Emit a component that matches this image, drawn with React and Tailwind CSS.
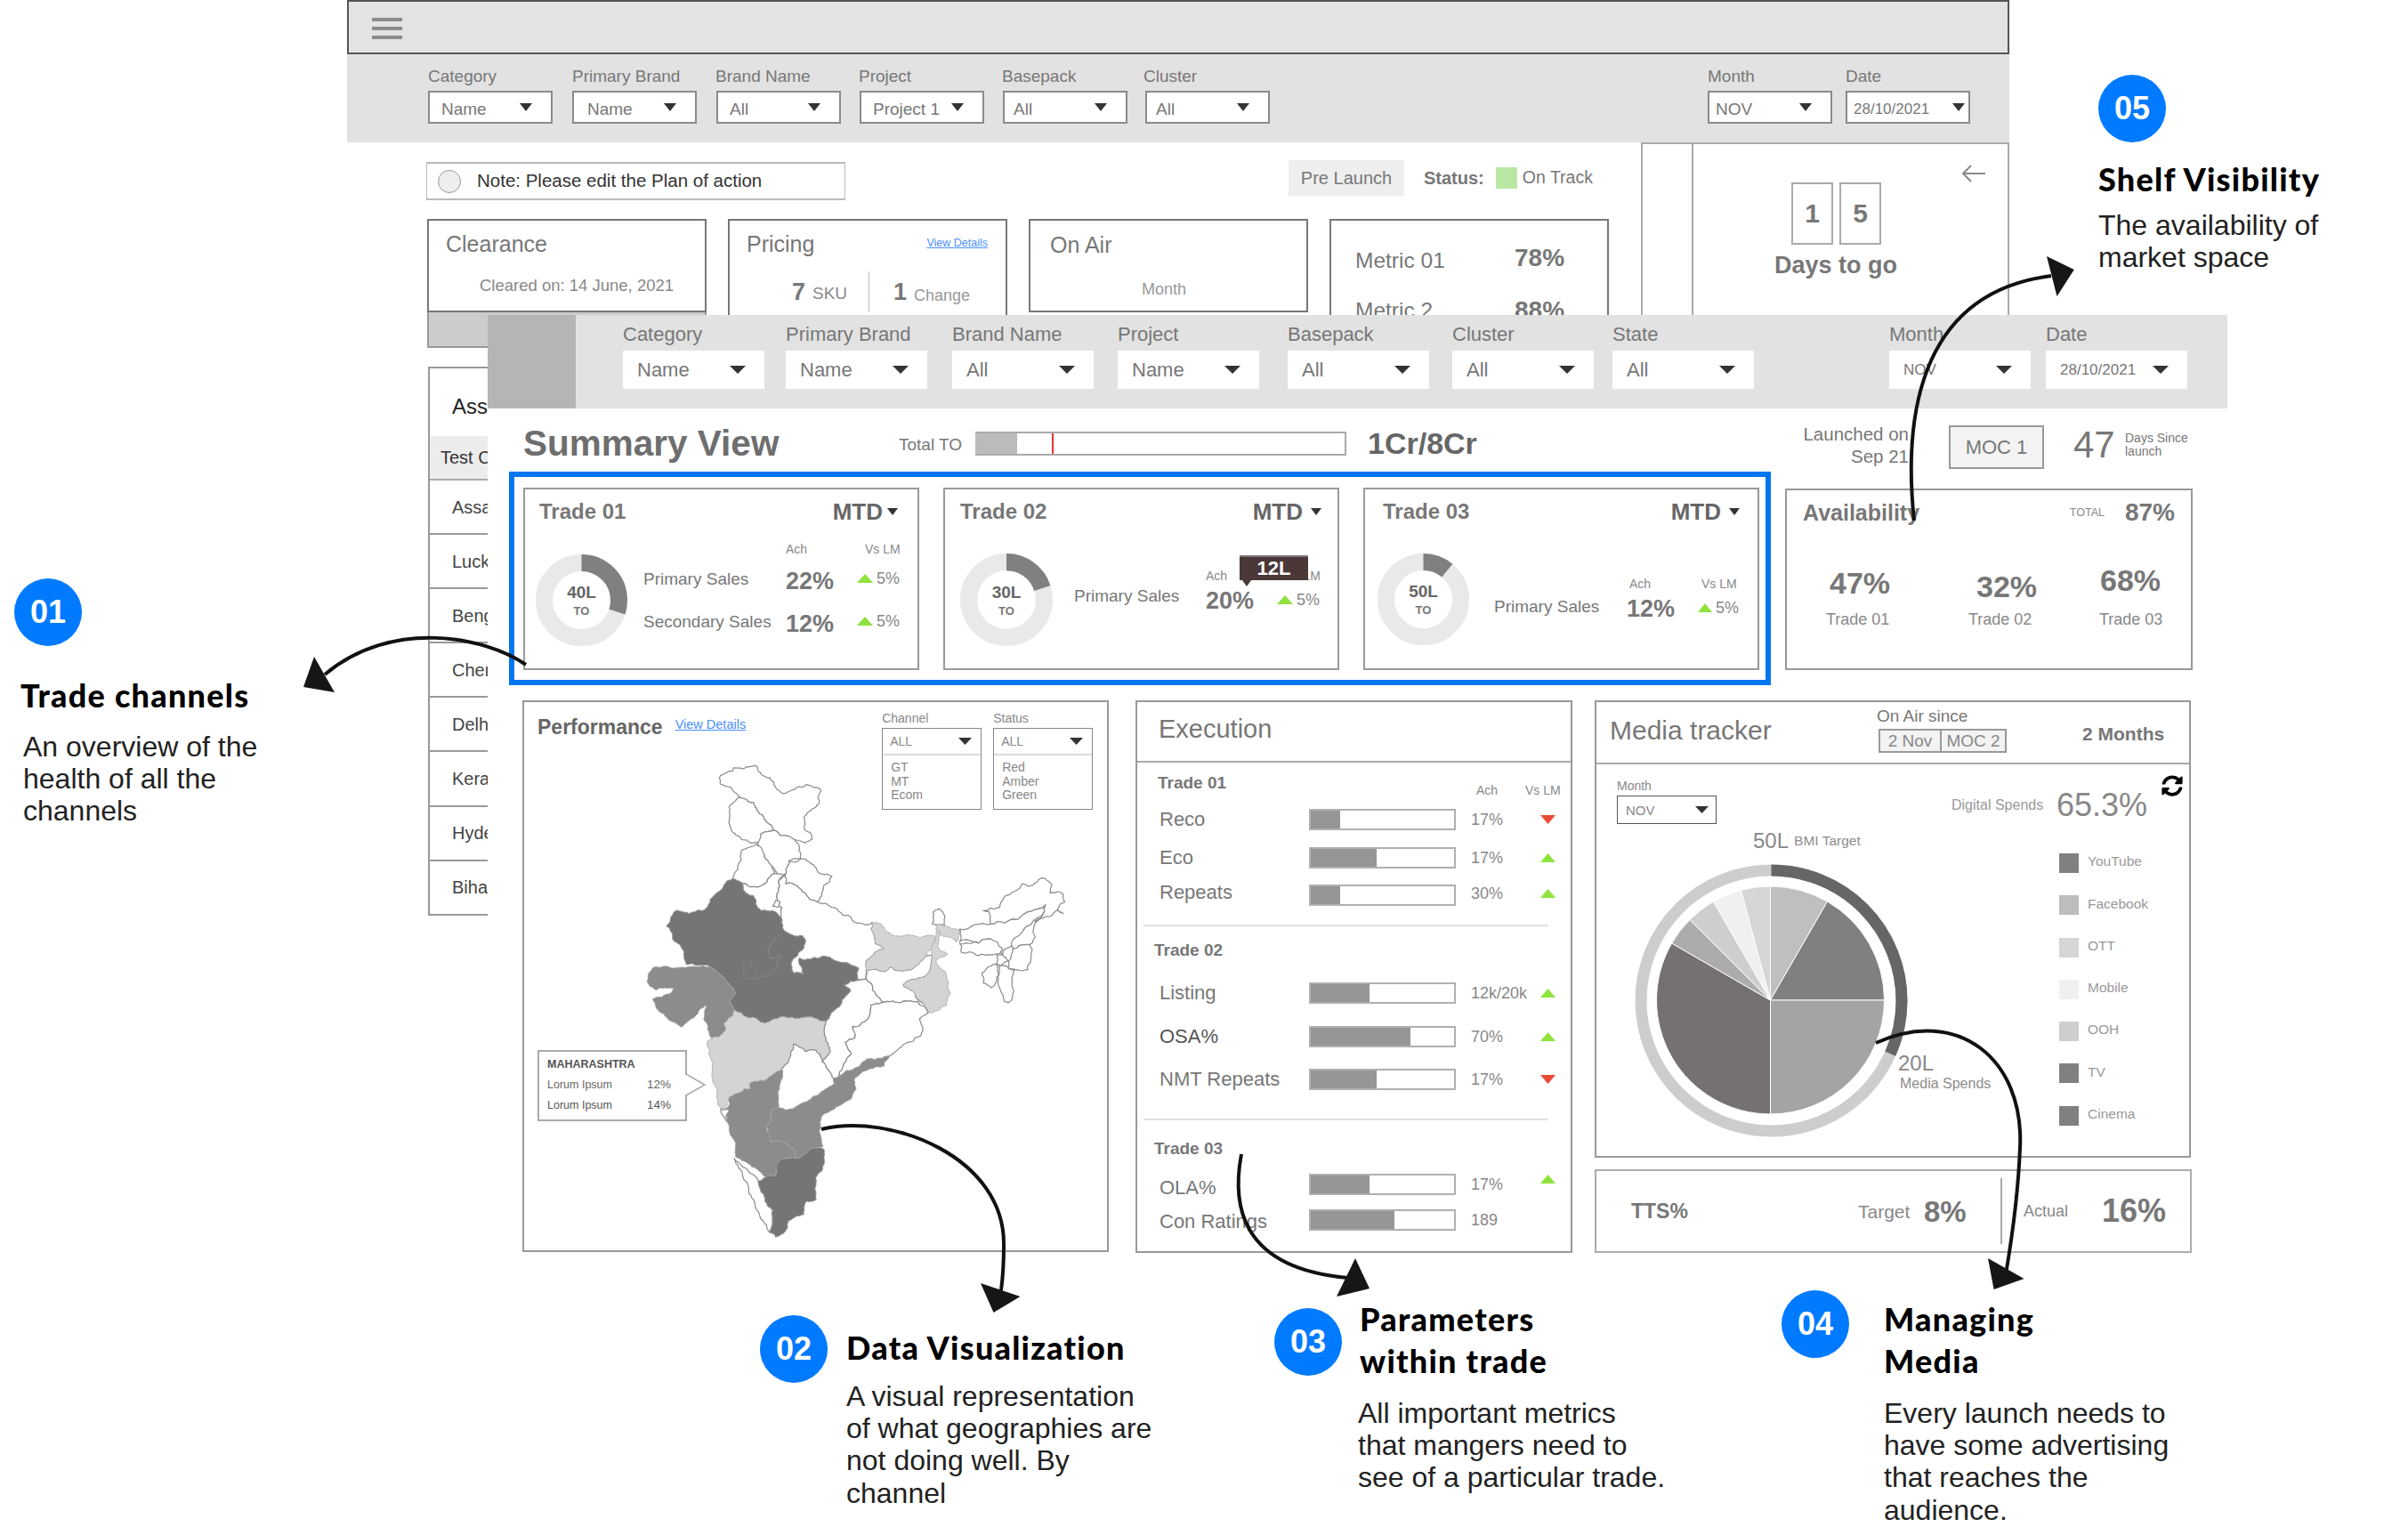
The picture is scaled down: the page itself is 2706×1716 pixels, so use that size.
import React from "react";
import { FaSyncAlt } from "react-icons/fa";

function Caret({ className = "w-[14px] h-[9px]", color = "#333" }) {
  return (
    <svg viewBox="0 0 14 9" preserveAspectRatio="none" className={className}>
      <path d="M0 0H14L7 9Z" fill={color} />
    </svg>
  );
}

function Tri({ up = true, className = "w-[18px] h-[10px]" }) {
  return (
    <svg viewBox="0 0 18 10" preserveAspectRatio="none" className={className}>
      <path d={up ? "M0 10H18L9 0Z" : "M0 0H18L9 10Z"} fill={up ? "#8fe33c" : "#ea4a33"} />
    </svg>
  );
}

function BackFilter({ label, value, className = "", small = false, textCls = "pl-[13px]", pr = "pr-[21px]", labelCls = "" }) {
  return (
    <div className={"w-[140px] " + className}>
      <div className={"h-[20px] mb-[6px] leading-[20px] text-[19px] text-[#777] " + labelCls}>{label}</div>
      <div className={"h-[37px] bg-white border-2 border-[#8a8a8a] flex items-center justify-between " + pr}>
        <span className={(small ? "text-[17px] pl-[7px]" : "text-[19px] " + textCls) + " text-[#777] leading-none mt-[3px]"}>{value}</span>
        <Caret />
      </div>
    </div>
  );
}

function FrontFilter({ label, value, className = "", small = false }) {
  return (
    <div className={"w-[159px] " + className}>
      <div className="h-[20px] mb-[8px] leading-[20px] text-[22px] text-[#777]">{label}</div>
      <div className="h-[43px] bg-white flex items-center justify-between pl-[16px] pr-[21px]">
        <span className={(small ? "text-[17px]" : "text-[22px]") + " text-[#777] leading-none"}>{value}</span>
        <Caret className="w-[18px] h-[9px]" />
      </div>
    </div>
  );
}

function Donut({ fraction, center, size = 103 }) {
  const r = 42;
  const c = 2 * Math.PI * r;
  return (
    <div className="relative shrink-0" style={{ width: size, height: size }}>
      <svg viewBox="0 0 103 103" className="w-full h-full -rotate-90">
        <circle cx="51.5" cy="51.5" r={r} fill="none" stroke="#e9e9e9" strokeWidth="19" />
        <circle cx="51.5" cy="51.5" r={r} fill="none" stroke="#808080" strokeWidth="19" strokeDasharray={`${fraction * c} ${c}`} />
      </svg>
      <div className="absolute inset-0 flex flex-col items-center justify-center">
        <span className="text-[19px] font-bold text-[#666] leading-[22px]">{center}</span>
        <span className="text-[13px] font-bold text-[#777] leading-[14px] mt-[3px]">TO</span>
      </div>
    </div>
  );
}

function TradeHeader({ title, cls, gap = "ml-[5px]" }) {
  return (
    <div className={"h-[50px] flex items-center justify-between " + cls}>
      <span className="text-[24px] font-bold text-[#777] leading-none">{title}</span>
      <span className="flex items-center">
        <span className="text-[26px] font-bold text-[#666] leading-none">MTD</span>
        <Caret className={"w-[12px] h-[8px] " + gap} />
      </span>
    </div>
  );
}

function Delta({ className = "" }) {
  return (
    <div className={"flex items-center h-[30px] " + className}>
      <Tri />
      <span className="text-[18px] text-[#888] ml-[4px] leading-none">5%</span>
    </div>
  );
}

function Trade01() {
  return (
    <div className="w-[445px] h-[205px] border-2 border-[#999] bg-white">
      <TradeHeader title="Trade 01" cls="pl-[16px] pr-[22px]" />
      <div className="flex pl-[12px]">
        <div className="mt-[23px]">
          <Donut fraction={0.3} center="40L" />
        </div>
        <div className="ml-[18px] mt-[8px] grid grid-cols-[160px_80px_auto] grid-rows-[18px_48px_48px] items-center">
          <span />
          <span className="text-[14px] text-[#888] leading-none">Ach</span>
          <span className="text-[14px] text-[#888] leading-none pl-[9px]">Vs LM</span>
          <span className="text-[19px] text-[#777] leading-none">Primary Sales</span>
          <span className="text-[27px] font-bold text-[#777] leading-none mt-[6px]">22%</span>
          <Delta />
          <span className="text-[19px] text-[#777] leading-none">Secondary Sales</span>
          <span className="text-[27px] font-bold text-[#777] leading-none mt-[6px]">12%</span>
          <Delta />
        </div>
      </div>
    </div>
  );
}

function Trade02() {
  return (
    <div className="relative w-[445px] h-[205px] border-2 border-[#999] bg-white">
      <TradeHeader title="Trade 02" cls="pl-[17px] pr-[18px]" gap="ml-[9px]" />
      <div className="flex pl-[17px]">
        <div className="mt-[22px]">
          <Donut fraction={0.2} center="30L" size={104} />
        </div>
        <div className="ml-[24px] mt-[60px] w-[148px] text-[19px] text-[#777] leading-[20px]">Primary Sales</div>
        <div className="mt-[38px] w-[80px]">
          <div className="h-[18px] text-[14px] text-[#888] leading-[18px]">Ach</div>
          <div className="mt-[4px] h-[30px] text-[27px] font-bold text-[#777] leading-[30px]">20%</div>
        </div>
        <div className="mt-[38px] w-[49px]">
          <div className="h-[18px] text-[14px] text-[#888] leading-[18px] text-right">Vs LM</div>
          <Delta className="mt-[3px]" />
        </div>
      </div>
      <div className="absolute left-[331px] top-[74px] w-[77px] h-[28px] bg-[#4a3737] border-t-2 border-[#777] flex items-center justify-center">
        <span className="text-[22px] font-bold text-white leading-none">12L</span>
        <div className="absolute left-[3px] bottom-[-7px] w-0 h-0 border-l-[5px] border-r-[5px] border-t-[7px] border-l-transparent border-r-transparent border-t-[#4a3737]" />
      </div>
    </div>
  );
}

function Trade03() {
  return (
    <div className="w-[445px] h-[205px] border-2 border-[#999] bg-white">
      <TradeHeader title="Trade 03" cls="pl-[20px] pr-[20px]" gap="ml-[9px]" />
      <div className="flex pl-[14px]">
        <div className="mt-[22px]">
          <Donut fraction={0.11} center="50L" />
        </div>
        <div className="ml-[28px] mt-[72px] w-[149px] text-[19px] text-[#777] leading-[20px]">Primary Sales</div>
        <div className="mt-[47px] w-[80px]">
          <div className="h-[18px] text-[14px] text-[#888] leading-[18px] pl-[3px]">Ach</div>
          <div className="mt-[4px] h-[30px] text-[27px] font-bold text-[#777] leading-[30px]">12%</div>
        </div>
        <div className="mt-[47px] w-[46px]">
          <div className="h-[18px] text-[14px] text-[#888] leading-[18px] pl-[4px]">Vs LM</div>
          <Delta className="mt-[3px]" />
        </div>
      </div>
    </div>
  );
}

function hash(a, b, c, d) {
  const s = Math.sin(a * 12.9898 + b * 78.233 + c * 37.719 + d * 11.137) * 43758.5453;
  return s - Math.floor(s) - 0.5;
}

function roughEdge(p, q, depth) {
  if (depth === 0) return [];
  const [a, b] = p[0] < q[0] || (p[0] === q[0] && p[1] < q[1]) ? [p, q] : [q, p];
  const dx = b[0] - a[0];
  const dy = b[1] - a[1];
  const len = Math.hypot(dx, dy) || 1;
  const amp = Math.min(len * 0.16, 7) * hash(a[0], a[1], b[0], b[1]) * 2;
  const m = [(a[0] + b[0]) / 2 - (dy / len) * amp, (a[1] + b[1]) / 2 + (dx / len) * amp];
  return [...roughEdge(p, m, depth - 1), m, ...roughEdge(m, q, depth - 1)];
}

function roughPath(str) {
  const pts = str.trim().split(/\s+/).map((s) => s.split(",").map(Number));
  let out = [];
  pts.forEach((p, i) => {
    const q = pts[(i + 1) % pts.length];
    out.push(p, ...roughEdge(p, q, 3));
  });
  return "M" + out.map((p) => p[0].toFixed(1) + " " + p[1].toFixed(1)).join("L") + "Z";
}

function IndiaMap() {
  const W = "#ffffff", L = "#d4d4d4", M = "#8c8c8c", D = "#757575";
  const shapes = [
    [W, "85,72 100,60 130,50 135,38 170,40 210,32 215,48 240,68 268,85 275,105 303,125 345,105 380,95 428,115 420,160 395,180 370,205 375,230 370,240 395,262 398,280 375,292 355,285 335,280 310,268 270,250 262,235 240,215 215,185 200,155 180,152 155,138 135,120 125,105 88,92"],
    [W, "155,138 180,152 200,155 215,185 240,215 262,235 270,250 225,262 218,290 195,292 160,280 130,255 120,230 118,170"],
    [W, "215,290 225,262 270,250 310,268 340,280 355,320 360,345 320,352 310,395 285,400 262,370 240,345 225,320"],
    [W, "210,295 240,345 262,370 272,395 235,430 190,440 160,425 130,412 160,350 160,318"],
    [W, "310,395 320,352 368,345 415,385 465,405 437,435 430,470 415,490 385,475 345,435 310,430 305,410"],
    [W, "160,425 190,440 235,430 272,395 300,400 285,420 280,490 296,510 296,550 265,520 225,520 200,470 165,450"],
    [W, "305,400 285,420 280,490 296,510 296,550 305,590 365,605 375,625 350,670 330,690 335,730 368,735 355,680 400,680 430,675 480,690 555,715 555,755 580,750 580,690 610,660 640,650 610,630 605,600 600,560 575,568 530,545 500,535 470,510 440,495 415,490 385,475 345,435 310,430"],
    [W, "265,505 275,485 290,490 285,507"],
    [D, "130,412 160,425 165,450 200,470 225,520 265,520 296,550 305,590 365,605 375,625 350,670 330,690 335,730 368,735 355,680 400,680 430,675 480,690 555,715 555,755 505,770 528,790 495,835 460,870 445,892 400,880 340,885 290,880 240,900 180,880 135,855 120,825 140,800 107,757 53,708 -27,702 -34,659 -68,623 -94,574 -54,518 -34,525 33,518 53,482 113,417"],
    [M, "-155,733 -141,714 -41,711 53,708 107,757 140,800 120,825 135,855 130,875 100,900 105,925 60,952 45,920 35,870 39,837 13,868 -41,913 -88,886 -121,855 -141,819 -81,800 -68,782 -128,788 -159,757"],
    [L, "135,855 180,880 240,900 290,880 340,885 400,880 445,892 440,940 445,960 460,995 432,1030 410,990 375,995 335,970 325,1000 300,1050 295,1055 270,1070 235,1095 190,1100 190,1120 150,1135 118,1150 115,1190 90,1190 75,1150 60,1080 45,960 60,952 105,925 100,900 130,875"],
    [W, "335,970 375,995 410,990 432,1030 455,1060 470,1085 475,1105 430,1130 380,1165 320,1190 285,1185 290,1100 295,1055 300,1050 325,1000"],
    [W, "445,892 460,870 495,835 528,790 505,770 555,755 580,750 600,770 635,830 595,840 580,890 535,910 540,950 510,965 530,1005 500,1050 490,1080 470,1085 455,1060 432,1030 460,995 445,960 440,940"],
    [W, "580,750 580,720 640,725 660,710 730,720 775,680 800,670 795,720 770,745 705,770 745,800 790,855 765,840 725,825 670,825 635,830 600,770"],
    [W, "635,830 670,825 725,825 765,840 790,865 760,885 770,910 765,940 740,960 690,985 660,1010 590,1020 545,1050 490,1080 500,1050 530,1005 510,965 540,950 535,910 580,890 595,840"],
    [L, "600,560 630,565 645,590 700,605 760,612 810,605 800,650 775,680 730,720 660,710 640,725 580,720 580,690 610,660 640,650 610,630 605,600"],
    [L, "815,580 830,600 820,640 855,665 815,690 850,730 865,800 850,840 800,865 745,800 705,770 770,745 795,720 800,670 800,650"],
    [W, "803,565 805,525 830,515 845,535 845,570 825,570"],
    [L, "815,570 845,570 895,585 885,625 860,610 830,600"],
    [W, "895,582 1000,565 1090,550 1185,500 1180,525 1150,550 1110,585 1070,640 1040,660 1040,670 1020,640 1000,615 960,630 895,625"],
    [W, "975,520 1030,510 1050,470 1105,430 1140,435 1175,410 1205,430 1200,460 1245,465 1250,490 1225,515 1245,530 1220,520 1185,540 1150,560 1180,525 1185,500 1090,550 1000,565 995,525"],
    [W, "895,630 960,630 1000,615 1040,650 1030,665 950,670 900,660"],
    [W, "1110,585 1150,550 1150,610 1130,635 1075,650 1070,635"],
    [W, "1075,650 1130,635 1140,650 1125,720 1060,715"],
    [W, "1030,705 1080,720 1078,790 1060,830 1045,825 1025,740"],
    [W, "970,730 1020,700 1025,740 1000,780 975,765"],
    [W, "1020,670 1040,670 1060,690 1030,705 1020,700"],
    [M, "295,1055 290,1100 285,1185 262,1190 245,1245 255,1280 260,1300 300,1300 335,1320 345,1355 290,1360 280,1395 275,1415 240,1420 195,1385 140,1350 110,1230 118,1150 150,1135 190,1120 190,1100 235,1095 270,1070"],
    [M, "660,1010 640,1045 590,1055 540,1090 545,1125 510,1165 470,1190 430,1215 425,1255 435,1315 410,1320 345,1355 335,1320 300,1300 260,1300 245,1245 262,1190 285,1185 320,1190 380,1165 430,1130 475,1105 470,1085 490,1080 545,1050 590,1020"],
    [D, "345,1355 410,1320 438,1325 435,1380 410,1420 412,1495 380,1500 370,1545 320,1565 300,1610 275,1622 255,1605 265,1530 240,1490 215,1430 240,1420 275,1415 290,1360"],
    [W, "135,1355 165,1385 215,1430 240,1490 265,1530 255,1605 225,1560 195,1490 165,1420"],
    [W, "90,1190 118,1190 110,1230 100,1215"],
  ];
  return (
    <svg viewBox="0 0 1290 1650" className="absolute left-[191px] top-[61px] w-[430px] h-[550px] overflow-visible">
      {shapes.map(([fill, d], i) => (
        <path key={i} d={roughPath(d)} fill={fill} stroke={fill === W ? "#8a8a8a" : "#a4a4a4"} strokeWidth={fill === W ? 1.2 : 0.8} vectorEffect="non-scaling-stroke" strokeLinejoin="round" />
      ))}
      <path d={roughPath("290,600 250,650 255,680 290,670 275,720 215,750 190,690 160,700 165,740 215,750 275,720 290,670 255,680 250,650")} fill="none" stroke="#868686" strokeWidth="0.8" vectorEffect="non-scaling-stroke" />
    </svg>
  );
}

function MiniSelect({ label, items, className = "" }) {
  return (
    <div className={"w-[112px] " + className}>
      <div className="h-[16px] mt-[10px] mb-[3px] text-[14px] text-[#888] leading-[16px]">{label}</div>
      <div className="h-[92px] border-[1.5px] border-[#888] bg-white">
        <div className="h-[30px] border-b-2 border-[#ddd] flex items-center justify-between pl-[8px] pr-[10px]">
          <span className="text-[14px] text-[#888] leading-none">ALL</span>
          <Caret className="w-[15px] h-[8px]" />
        </div>
        <div className="pl-[9px] pt-[6px] text-[14px] text-[#888] leading-[15.5px]">
          {items.map((t) => (
            <div key={t}>{t}</div>
          ))}
        </div>
      </div>
    </div>
  );
}

function Performance() {
  return (
    <div className="relative w-[659px] h-[620px] border-2 border-[#999] bg-white">
      <IndiaMap />
      <div className="relative flex">
        <div className="pl-[15px] pt-[14px] text-[23px] font-bold text-[#666] leading-[28px]">Performance</div>
        <div className="ml-[14px] pt-[16px] text-[14.5px] text-[#4a90ff] underline leading-[18px]">View Details</div>
        <MiniSelect label="Channel" items={["GT", "MT", "Ecom"]} className="ml-[153px]" />
        <MiniSelect label="Status" items={["Red", "Amber", "Green"]} className="ml-[13px]" />
      </div>
      <div className="absolute left-[15px] top-[391px] w-[168px] h-[80px] border-2 border-[#aaa] bg-white pl-[9px] pt-[6px]">
        <div className="text-[12.5px] font-bold text-[#555] leading-[16px]">MAHARASHTRA</div>
        <div className="mt-[6px] flex items-center h-[18px] text-[#666]">
          <span className="w-[112px] text-[12.5px] leading-none">Lorum Ipsum</span>
          <span className="text-[13.5px] leading-none">12%</span>
        </div>
        <div className="mt-[5px] flex items-center h-[18px] text-[#555]">
          <span className="w-[112px] text-[12.5px] leading-none">Lorum Ipsum</span>
          <span className="text-[13.5px] leading-none">14%</span>
        </div>
        <svg viewBox="0 0 24 26" className="absolute left-[164px] top-[24px] w-[24px] h-[26px]">
          <path d="M1 1L22 13L1 25" fill="#fff" stroke="#aaa" strokeWidth="1.5" />
          <path d="M0 2V24" stroke="#fff" strokeWidth="3" />
        </svg>
      </div>
    </div>
  );
}

function ExecRow({ label, fill, value, tri, triUp = true, cls = "", labelCls = "text-[#777]", triCls = "", valCls = "" }) {
  return (
    <div className={"flex items-center h-[24px] " + cls}>
      <span className={"w-[168px] text-[22px] leading-none " + labelCls}>{label}</span>
      <div className="w-[165px] h-[24px] border-2 border-[#b0b0b0] bg-white">
        <div className="h-full bg-[#969696]" style={{ width: fill }} />
      </div>
      <span className={"ml-[17px] w-[78px] text-[18px] text-[#888] leading-none whitespace-nowrap " + valCls}>{value}</span>
      {tri && <Tri up={triUp} className={"w-[17px] h-[10px] " + triCls} />}
    </div>
  );
}

function Execution() {
  return (
    <div className="w-[491px] h-[621px] border-2 border-[#999] bg-white">
      <div className="h-[68px] border-b-2 border-[#aaa] flex items-center pl-[24px] text-[29px] text-[#777] leading-none">
        <span className="mb-[6px]">Execution</span>
      </div>
      <div className="pl-[25px]">
        <div className="flex mt-[12px] h-[40px]">
          <span className="w-[358px] text-[19px] font-bold text-[#777] leading-[22px] ml-[-2px]">Trade 01</span>
          <span className="w-[55px] mt-[11px] text-[14px] text-[#888] leading-[16px]">Ach</span>
          <span className="mt-[11px] text-[14px] text-[#888] leading-[16px]">Vs LM</span>
        </div>
        <ExecRow label="Reco" fill={33} value="17%" tri triUp={false} />
        <ExecRow label="Eco" fill={74} value="17%" tri cls="mt-[19px]" />
        <ExecRow label="Repeats" fill={33} value="30%" tri cls="mt-[18px]" labelCls="text-[#777] mb-[6px]" valCls="mb-[4px]" triCls="mb-[4px]" />
      </div>
      <div className="mt-[21px] ml-[7px] w-[455px] h-[2px] bg-[#e0e0e0]" />
      <div className="pl-[25px]">
        <div className="mt-[16px] ml-[-6px] h-[22px] text-[19px] font-bold text-[#777] leading-[22px]">Trade 02</div>
        <ExecRow label="Listing" fill={66} value="12k/20k" tri cls="mt-[25px]" />
        <ExecRow label="OSA%" fill={112} value="70%" tri cls="mt-[25px]" labelCls="text-[#555]" />
        <ExecRow label="NMT Repeats" fill={74} value="17%" tri triUp={false} cls="mt-[24px]" />
      </div>
      <div className="mt-[32px] ml-[7px] w-[455px] h-[2px] bg-[#e0e0e0]" />
      <div className="pl-[25px]">
        <div className="mt-[21px] ml-[-6px] h-[22px] text-[19px] font-bold text-[#777] leading-[22px]">Trade 03</div>
        <ExecRow label="OLA%" fill={66} value="17%" tri cls="mt-[17px]" labelCls="text-[#777] mt-[8px]" triCls="mt-[-12px]" />
        <ExecRow label="Con Ratings" fill={94} value="189" cls="mt-[16px]" labelCls="text-[#777] mt-[3px]" />
      </div>
    </div>
  );
}

function polar(cx, cy, r, deg) {
  const a = ((deg - 90) * Math.PI) / 180;
  return [cx + r * Math.cos(a), cy + r * Math.sin(a)];
}

function Pie() {
  const segs = [
    [0, 30, "#bfbfbf"],
    [30, 90, "#808080"],
    [90, 180, "#a4a4a4"],
    [180, 300, "#747170"],
    [300, 315, "#adabab"],
    [315, 330, "#cfcdcd"],
    [330, 345, "#f0f0f0"],
    [345, 360, "#d6d6d6"],
  ];
  const R = 146.5;
  const C = 2 * Math.PI * R;
  return (
    <svg viewBox="0 0 307 307" className="w-[307px] h-[307px]">
      <circle cx="153.5" cy="153.5" r={R} fill="none" stroke="#cdcdcd" strokeWidth="13" />
      <circle cx="153.5" cy="153.5" r={R} fill="none" stroke="#666" strokeWidth="13" strokeDasharray={`${(114 / 360) * C} ${C}`} transform="rotate(-90 153.5 153.5)" />
      {segs.map(([a, b, f]) => {
        const [x1, y1] = polar(152.5, 153, 128, a);
        const [x2, y2] = polar(152.5, 153, 128, b);
        return <path key={a} d={`M152.5 153L${x1} ${y1}A128 128 0 ${b - a > 180 ? 1 : 0} 1 ${x2} ${y2}Z`} fill={f} stroke="#fff" strokeWidth="1" />;
      })}
    </svg>
  );
}

function Media() {
  const legend = [
    ["YouTube", "bg-[#808080]"],
    ["Facebook", "bg-[#bdbdbd]"],
    ["OTT", "bg-[#d6d6d6]"],
    ["Mobile", "bg-[#f0f0f0]"],
    ["OOH", "bg-[#cfcdcd]"],
    ["TV", "bg-[#808080]"],
    ["Cinema", "bg-[#808080]"],
  ];
  return (
    <div className="w-[670px] h-[514px] border-2 border-[#999] bg-white">
      <div className="relative h-[70px] border-b-2 border-[#aaa] flex">
        <div className="pl-[15px] pt-[15px] text-[30px] text-[#777] leading-[34px] w-[317px]">Media tracker</div>
        <div className="pt-[6px]">
          <div className="h-[20px] text-[19px] text-[#777] leading-[20px] ml-[-2px]">On Air since</div>
          <div className="mt-[4px] w-[144px] h-[27px] bg-[#f3f3f3] border-2 border-[#999] flex text-[19px] text-[#888] leading-none">
            <span className="w-[69px] border-r-2 border-[#999] flex items-center justify-center">2 Nov</span>
            <span className="flex-1 flex items-center justify-center">MOC 2</span>
          </div>
        </div>
        <div className="ml-[85px] pt-[24px] text-[21px] font-bold text-[#777] leading-[24px]">2 Months</div>
      </div>
      <div className="relative flex h-[440px]">
        <div className="w-[399px] pl-[23px] shrink-0">
          <div className="mt-[17px] h-[14px] text-[14px] text-[#888] leading-[14px]">Month</div>
          <div className="mt-[4px] w-[112px] h-[32px] border-[1.5px] border-[#555] flex items-center justify-between pl-[9px] pr-[8px]">
            <span className="text-[15px] text-[#888] leading-none">NOV</span>
            <Caret className="w-[15px] h-[8px]" />
          </div>
          <div className="mt-[5px] ml-[153px] h-[28px] flex items-center">
            <span className="text-[24px] text-[#888] leading-none">50L</span>
            <span className="ml-[6px] text-[15.5px] text-[#8c8c8c] leading-none">BMI Target</span>
          </div>
          <div className="relative mt-[12px] ml-[20px] w-[307px] h-[307px]">
            <Pie />
            <div className="absolute left-[296px] top-[210px] whitespace-nowrap">
              <div className="text-[24px] text-[#888] leading-[28px]">20L</div>
              <div className="ml-[2px] text-[16px] text-[#8c8c8c] leading-[18px]">Media Spends</div>
            </div>
          </div>
        </div>
        <div>
          <div className="mt-[24px] h-[44px] flex items-center">
            <span className="w-[118px] text-[16px] text-[#999] leading-none">Digital Spends</span>
            <span className="text-[36px] text-[#888] leading-none">65.3%</span>
          </div>
          <div className="mt-[32px] ml-[121px] flex flex-col gap-[25.3px]">
            {legend.map(([t, c]) => (
              <div key={t} className="flex items-center h-[22px]">
                <div className={"w-[22px] h-[22px] " + c} />
                <span className="ml-[10px] mb-[4px] text-[15.5px] text-[#999] leading-none">{t}</span>
              </div>
            ))}
          </div>
        </div>
        <FaSyncAlt className="absolute left-[634px] top-[12px] text-black w-[26px] h-[24px]" />
      </div>
    </div>
  );
}

function Tts() {
  return (
    <div className="mt-[13px] w-[671px] h-[94px] border-2 border-[#aaa] bg-white flex items-center">
      <span className="ml-[39px] w-[255px] text-[23px] font-bold text-[#777] leading-none">TTS%</span>
      <span className="w-[74px] text-[21px] text-[#888] leading-none">Target</span>
      <span className="w-[86px] text-[33px] font-bold text-[#777] leading-none">8%</span>
      <div className="w-[2px] h-[74px] bg-[#aaa]" />
      <span className="ml-[24px] w-[88px] text-[18px] text-[#888] leading-none">Actual</span>
      <span className="text-[36px] font-bold text-[#777] leading-none">16%</span>
    </div>
  );
}

function BackDashboard() {
  return (
    <div className="absolute left-[390px] top-0 w-[1868px] h-[1040px]">
      <div className="h-[61px] bg-[#e3e3e3] border-2 border-[#555] pt-[18px] pl-[26px] flex flex-col gap-[6px]">
        <div className="w-[34px] h-[4px] bg-[#8c8c8c]" />
        <div className="w-[34px] h-[4px] bg-[#8c8c8c]" />
        <div className="w-[34px] h-[4px] bg-[#8c8c8c]" />
      </div>
      <div className="h-[99px] bg-[#e2e2e2] flex pt-[15px] pl-[91px]">
        <BackFilter label="Category" value="Name" />
        <BackFilter label="Primary Brand" value="Name" className="ml-[22px]" textCls="pl-[15px]" />
        <BackFilter label="Brand Name" value="All" className="ml-[22px]" labelCls="ml-[-1px]" />
        <BackFilter label="Project" value="Project 1" className="ml-[21px]" labelCls="ml-[-1px]" />
        <BackFilter label="Basepack" value="All" className="ml-[21px]" textCls="pl-[10px]" labelCls="ml-[-1px]" />
        <BackFilter label="Cluster" value="All" className="ml-[20px]" textCls="pl-[10px]" labelCls="ml-[-2px]" />
        <BackFilter label="Month" value="NOV" className="ml-[492px]" textCls="pl-[7px]" />
        <BackFilter label="Date" value="28/10/2021" small pr="pr-[4px]" className="ml-[15px] w-[140px]" />
      </div>
      <div className="flex">
        <div className="w-[1454px] shrink-0">
          <div className="h-[65px] pt-[20px] flex items-start">
            <div className="ml-[89px] mt-[2px] w-[471px] h-[43px] border-2 border-[#bbb] border-x-[1px] flex items-center pl-[12px]">
              <div className="w-[26px] h-[26px] rounded-full bg-[#eee] border border-[#999]" />
              <span className="ml-[18px] text-[20.5px] text-[#333] leading-none">Note: Please edit the Plan of action</span>
            </div>
            <div className="ml-[498px] w-[130px] h-[40px] bg-[#eee] flex items-center justify-center text-[20px] text-[#777] leading-none">Pre Launch</div>
            <div className="ml-[22px] h-[40px] flex items-center">
              <span className="text-[20px] font-bold text-[#777] leading-none">Status:</span>
              <div className="ml-[13px] w-[24px] h-[24px] bg-[#b9e8a5]" />
              <span className="ml-[6px] text-[19.5px] text-[#777] leading-none">On Track</span>
            </div>
          </div>
          <div className="mt-[21px] pl-[90px] flex gap-[24px]">
            <div className="w-[314px]">
              <div className="h-[105px] border-2 border-[#777] relative pl-[19px] pt-[11px]">
                <div className="text-[25px] text-[#777] leading-[30px]">Clearance</div>
                <div className="ml-[38px] mt-[21px] text-[18.5px] text-[#888] leading-[22px]">Cleared on: 14 June, 2021</div>
              </div>
              <div className="h-[40px] bg-[#ccc] border-2 border-t-0 border-[#999]" />
            </div>
            <div className="w-[314px] h-[130px] border-2 border-[#777]">
              <div className="flex justify-between pl-[19px] pr-[20px] pt-[11px]">
                <div className="text-[25px] text-[#777] leading-[30px]">Pricing</div>
                <div className="text-[12.5px] text-[#4a90ff] underline leading-[18px] pt-[5px]">View Details</div>
              </div>
              <div className="flex h-[60px] mt-[16px] items-start">
                <span className="ml-[70px] mt-[8px] text-[27px] font-bold text-[#777] leading-[30px] w-[23px]">7</span>
                <span className="mt-[14px] text-[19px] text-[#888] leading-[22px] w-[63px]">SKU</span>
                <div className="w-[1px] h-[46px] bg-[#bbb]" />
                <span className="ml-[27px] mt-[8px] text-[27px] font-bold text-[#777] leading-[30px] w-[23px]">1</span>
                <span className="mt-[16px] text-[18px] text-[#999] leading-[22px]">Change</span>
              </div>
            </div>
            <div className="w-[314px] h-[105px] border-2 border-[#777] pl-[22px] pt-[12px]">
              <div className="text-[25px] text-[#777] leading-[30px]">On Air</div>
              <div className="ml-[103px] mt-[24px] text-[18px] text-[#999] leading-[22px]">Month</div>
            </div>
            <div className="w-[314px] h-[130px] border-2 border-[#777] pl-[27px] pt-[30px]">
              <div className="flex h-[30px] items-center">
                <span className="w-[179px] text-[24.5px] text-[#777] leading-none">Metric 01</span>
                <span className="text-[28px] font-bold text-[#777] leading-none mt-[-6px]">78%</span>
              </div>
              <div className="flex h-[30px] items-center mt-[26px]">
                <span className="w-[179px] text-[24.5px] text-[#777] leading-none">Metric 2</span>
                <span className="text-[28px] font-bold text-[#777] leading-none">88%</span>
              </div>
            </div>
          </div>
          <div className="mt-[21px] ml-[91px] w-[200px] border-l-2 border-t-2 border-[#999]">
            <div className="h-[76px] pl-[25px] pt-[28px] text-[24px] text-[#222] leading-[30px]">Assam</div>
            <div className="h-[50px] bg-[#ececec] border-b-2 border-[#aaa] flex items-center pl-[12px] text-[20px] text-[#333] leading-none">Test City</div>
            {["Assam", "Lucknow", "Bengaluru", "Chennai", "Delhi", "Kerala", "Hyderabad", "Bihar"].map((t) => (
              <div key={t} className="h-[61.1px] border-b-2 border-[#999] flex items-center pl-[25px] text-[20px] text-[#444] leading-none">{t}</div>
            ))}
          </div>
        </div>
        <div className="w-[414px] h-[200px] border-x-2 border-t-2 border-[#aaa] pl-[55px]">
          <div className="h-full border-l-2 border-[#aaa] flex flex-col">
            <div className="flex justify-end pr-[24px] pt-[22px] h-[43px]">
              <svg viewBox="0 0 28 22" className="w-[28px] h-[22px]">
                <path d="M11 2L2 11L11 20M2 11H27" fill="none" stroke="#8a8a8a" strokeWidth="2" />
              </svg>
            </div>
            <div className="ml-[110px] flex gap-[7px]">
              {["1", "5"].map((d) => (
                <div key={d} className="w-[47px] h-[70px] border-2 border-[#aaa] flex items-center justify-center text-[30px] font-bold text-[#777] leading-none">{d}</div>
              ))}
            </div>
            <div className="ml-[91px] mt-[9px] text-[27px] font-bold text-[#777] leading-[28px]">Days to go</div>
          </div>
        </div>
      </div>
    </div>
  );
}

function FrontDashboard() {
  return (
    <div className="absolute left-[548px] top-[354px] w-[1955px] h-[1060px] bg-white">
      <div className="h-[105px] bg-[#e2e2e2] flex">
        <div className="w-[99px] h-full bg-[#b5b5b5]" />
        <div className="flex pt-[12px] pl-[53px]">
          <FrontFilter label="Category" value="Name" />
          <FrontFilter label="Primary Brand" value="Name" className="ml-[24px]" />
          <FrontFilter label="Brand Name" value="All" className="ml-[28px]" />
          <FrontFilter label="Project" value="Name" className="ml-[27px]" />
          <FrontFilter label="Basepack" value="All" className="ml-[32px]" />
          <FrontFilter label="Cluster" value="All" className="ml-[26px]" />
          <FrontFilter label="State" value="All" className="ml-[21px]" />
          <FrontFilter label="Month" value="NOV" small className="ml-[152px]" />
          <FrontFilter label="Date" value="28/10/2021" small className="ml-[17px]" />
        </div>
      </div>
      <div className="h-[71px] flex items-start pl-[40px]">
        <div className="mt-[16px] w-[422px] h-[46px] text-[40.5px] font-bold text-[#6e6e6e] leading-[46px]">Summary View</div>
        <div className="mt-[30px] w-[86px] h-[22px] text-[19px] text-[#777] leading-[22px]">Total TO</div>
        <div className="relative mt-[26px] w-[417px] h-[27px] border-2 border-[#aaa] border-l-0">
          <div className="w-[47px] h-full bg-[#bbb]" />
          <div className="absolute left-[86px] top-0 w-[2px] h-full bg-[#e33]" />
        </div>
        <div className="ml-[24px] mt-[19px] w-[121px] h-[40px] text-[34px] font-bold text-[#666] leading-[40px] whitespace-nowrap">1Cr/8Cr</div>
        <div className="ml-[368px] mt-[16px] w-[119px] text-right text-[20.5px] text-[#777] leading-[25px] whitespace-nowrap">
          <div>Launched on</div>
          <div>Sep 21</div>
        </div>
        <div className="ml-[45px] mt-[19px] w-[107px] h-[49px] bg-[#f3f3f3] border-2 border-[#999] flex items-center justify-center text-[22px] text-[#777] leading-none">MOC 1</div>
        <div className="ml-[33px] mt-[21px] w-[58px] h-[40px] text-[42px] text-[#777] leading-[40px]">47</div>
        <div className="mt-[26px] text-[14px] text-[#777] leading-[15px]">
          <div>Days Since</div>
          <div>launch</div>
        </div>
      </div>
      <div className="flex items-start pl-[24px]">
        <div className="w-[1418px] h-[240px] border-[6px] border-[#0077f0] pl-[10px] pt-[12px] flex gap-[27px]">
          <Trade01 />
          <Trade02 />
          <Trade03 />
        </div>
        <div className="ml-[16px] mt-[19px] w-[458px] h-[204px] border-2 border-[#999] bg-white">
          <div className="h-[50px] flex items-center justify-between pl-[18px] pr-[18px]">
            <span className="text-[25px] font-bold text-[#777] leading-none">Availability</span>
            <span className="flex items-center">
              <span className="text-[12.5px] text-[#888] leading-none mr-[23px]">TOTAL</span>
              <span className="text-[28px] font-bold text-[#777] leading-none">87%</span>
            </span>
          </div>
          <div className="flex pl-[44px]">
            <div className="w-[160px] pt-[34px]">
              <div className="h-[40px] ml-[4px] text-[34px] font-bold text-[#777] leading-[40px]">47%</div>
              <div className="mt-[10px] h-[22px] text-[18px] text-[#888] leading-[22px]">Trade 01</div>
            </div>
            <div className="w-[147px] pt-[38px]">
              <div className="h-[40px] ml-[9px] text-[34px] font-bold text-[#777] leading-[40px]">32%</div>
              <div className="mt-[6px] h-[22px] text-[18px] text-[#888] leading-[22px]">Trade 02</div>
            </div>
            <div className="pt-[31px]">
              <div className="h-[40px] ml-[1px] text-[34px] font-bold text-[#777] leading-[40px]">68%</div>
              <div className="mt-[13px] h-[22px] text-[18px] text-[#888] leading-[22px]">Trade 03</div>
            </div>
          </div>
        </div>
      </div>
      <div className="mt-[17px] flex items-start pl-[39px]">
        <Performance />
        <div className="ml-[30px]">
          <Execution />
        </div>
        <div className="ml-[25px]">
          <Media />
          <Tts />
        </div>
      </div>
    </div>
  );
}

function Badge({ n }) {
  return (
    <div className="w-[76px] h-[76px] shrink-0 rounded-full bg-[#007aff] flex items-center justify-center text-[36px] font-bold text-white leading-none">{n}</div>
  );
}

const titleCls = "font-['Lato',sans-serif] font-black text-[36px] tracking-[1.25px] text-black";
const descCls = "text-[32px] text-[#222] leading-[36.2px]";

function Callouts() {
  return (
    <>
      <div className="absolute left-[16px] top-[650px]">
        <Badge n="01" />
        <div className={titleCls + " ml-[7px] mt-[35px] h-[40px] leading-[40px]"}>Trade channels</div>
        <div className={descCls + " ml-[10px] mt-[20px]"}>
          An overview of the<br />health of all the<br />channels
        </div>
      </div>
      <div className="absolute left-[854px] top-[1478px] flex">
        <Badge n="02" />
        <div className="ml-[21px]">
          <div className={titleCls + " mt-[16px] h-[40px] leading-[40px]"}>Data Visualization</div>
          <div className={descCls + " mt-[17px]"}>
            A visual representation<br />of what geographies are<br />not doing well. By<br />channel
          </div>
        </div>
      </div>
      <div className="absolute left-[1432px] top-[1470px] flex">
        <Badge n="03" />
        <div className="ml-[20px] mt-[-11px]">
          <div className={titleCls + " leading-[47px]"}>Parameters<br />within trade</div>
          <div className={descCls + " mt-[17px] ml-[-2px]"}>
            All important metrics<br />that mangers need to<br />see of a particular trade.
          </div>
        </div>
      </div>
      <div className="absolute left-[2002px] top-[1450px] flex">
        <Badge n="04" />
        <div className="ml-[39px] mt-[9px]">
          <div className={titleCls + " leading-[47px]"}>Managing<br />Media</div>
          <div className={descCls + " mt-[17px]"}>
            Every launch needs to<br />have some advertising<br />that reaches the<br />audience.
          </div>
        </div>
      </div>
      <div className="absolute left-[2358px] top-[84px]">
        <Badge n="05" />
        <div className={titleCls + " mt-[21px] h-[40px] leading-[40px]"}>Shelf Visibility</div>
        <div className={descCls + " mt-[14px]"}>
          The availability of<br />market space
        </div>
      </div>
    </>
  );
}

function Arrows() {
  const lines = [
    "M591 747C545 715 440 695 365 758",
    "M923 1269C1000 1250 1130 1300 1128 1400C1128 1420 1127 1435 1125 1450",
    "M1395 1297C1385 1350 1390 1425 1515 1436",
    "M2108 1172C2200 1130 2275 1190 2270 1290C2268 1340 2262 1385 2254 1432",
    "M2151 585C2140 480 2150 330 2305 310",
  ];
  const heads = [
    "353,738 341,772 376,778",
    "1102,1442 1116.5,1475 1146.5,1457",
    "1523,1414 1502,1457 1539,1448",
    "2234,1414 2240.6,1449 2274.5,1437",
    "2300,288 2330.8,303 2311.5,333",
  ];
  return (
    <svg viewBox="0 0 2706 1716" className="absolute inset-0 w-[2706px] h-[1716px] pointer-events-none">
      {lines.map((d) => (
        <path key={d} d={d} fill="none" stroke="#111" strokeWidth="4" />
      ))}
      {heads.map((p) => (
        <polygon key={p} points={p} fill="#161616" />
      ))}
    </svg>
  );
}

export default function App() {
  return (
    <div className="relative w-[2706px] h-[1716px] bg-white overflow-hidden font-['Liberation_Sans',Arial,sans-serif]">
      <BackDashboard />
      <FrontDashboard />
      <Callouts />
      <Arrows />
    </div>
  );
}
